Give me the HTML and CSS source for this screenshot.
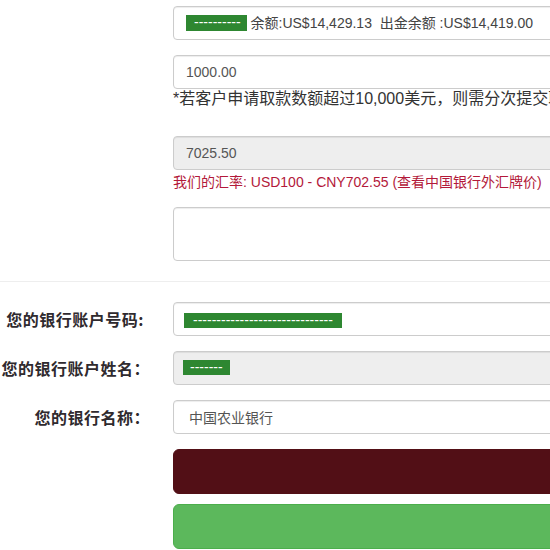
FILE: index.html
```html
<!DOCTYPE html>
<html lang="zh-CN">
<head>
<meta charset="utf-8">
<title>出金申请</title>
<link rel="stylesheet" href="styles.css">
</head>
<body>
<div class="page">
  <form class="form">
    <div class="group">
      <div class="label"></div>
      <div class="field">
        <div class="control static"><span class="mask mask-a">----------</span> 余额:US$14,429.13&nbsp; 出金余额 :US$14,419.00</div>
      </div>
    </div>
    <div class="group">
      <div class="label"></div>
      <div class="field">
        <input class="control" type="text" value="1000.00">
        <p class="note">*若客户申请取款数额超过10,000美元，则需分次提交取款申请。</p>
      </div>
    </div>
    <div class="group">
      <div class="label"></div>
      <div class="field">
        <input class="control disabled" type="text" value="7025.50" disabled>
        <p class="rate">我们的汇率: USD100 - CNY702.55 (查看中国银行外汇牌价)</p>
      </div>
    </div>
    <div class="group">
      <div class="label"></div>
      <div class="field">
        <textarea class="control area" rows="2"></textarea>
      </div>
    </div>
    <hr class="divider">
    <div class="group">
      <label class="label">您的银行账户号码:</label>
      <div class="field">
        <div class="control static"><span class="mask mask-b">------------------------------</span></div>
      </div>
    </div>
    <div class="group">
      <label class="label">您的银行账户姓名<span class="colon">：</span></label>
      <div class="field">
        <div class="control static disabled"><span class="mask mask-c">-------</span></div>
      </div>
    </div>
    <div class="group">
      <label class="label">您的银行名称<span class="colon">：</span></label>
      <div class="field">
        <input class="control indent" type="text" value="中国农业银行">
      </div>
    </div>
    <div class="group">
      <div class="label"></div>
      <div class="field">
        <button type="button" class="btn btn-dark"></button>
      </div>
    </div>
    <div class="group last">
      <div class="label"></div>
      <div class="field">
        <button type="button" class="btn btn-green"></button>
      </div>
    </div>
  </form>
</div>
</body>
</html>
```
FILE: styles.css
```css
html, body {
  margin: 0;
  padding: 0;
  overflow: hidden;
  background: #fff;
}
body {
  font-family: "Liberation Sans", "Noto Sans CJK SC", Arial, sans-serif;
  font-size: 14px;
  line-height: 20px;
  color: #333;
}
.page {
  width: 900px;
  padding-top: 6px;
}
.form {
  margin: 0;
}
.group {
  display: grid;
  grid-template-columns: 158px 1fr;
  align-items: center;
  margin-bottom: 15px;
}
.group.last {
  margin-bottom: 0;
}
.label {
  box-sizing: border-box;
  padding-right: 14px;
  text-align: right;
  font-family: "Noto Sans CJK SC", "Liberation Sans", sans-serif;
  font-weight: bold;
  font-size: 16px;
  line-height: 20px;
  letter-spacing: 0.5px;
  color: #2f2a2e;
  white-space: nowrap;
}
.colon {
  margin-right: -6px;
}
.field {
  padding: 0 15px;
  min-width: 0;
}
.control {
  display: block;
  box-sizing: border-box;
  width: 100%;
  height: 34px;
  margin: 0;
  padding: 6px 12px;
  font-family: "Liberation Sans", "Noto Sans CJK SC", Arial, sans-serif;
  font-size: 14px;
  line-height: 20px;
  color: #555;
  background: #fff;
  border: 1px solid #ccc;
  border-radius: 4px;
  box-shadow: inset 0 1px 1px rgba(0, 0, 0, 0.075);
  outline: none;
}
.indent {
  padding-left: 15px;
}
.static {
  white-space: nowrap;
  color: #444;
}
.disabled {
  background: #eee;
  color: #555;
}
.area {
  height: 54px;
  resize: none;
}
.mask {
  display: inline-block;
  vertical-align: top;
  background: #2e8731;
  color: #fff;
  height: 16px;
  line-height: 14px;
  margin-top: 2px;
  padding: 0 6px 0 8px;
  font-size: 14px;
}
.mask-b {
  height: 15px;
  margin-top: 4px;
  margin-left: -2px;
  padding: 0 9px;
}
.mask-c {
  height: 15px;
  margin-top: 2px;
  margin-left: -3px;
  padding: 0 7px;
}
.note {
  margin: 0 0 12px;
  font-family: "Liberation Sans", "Noto Sans CJK SC", sans-serif;
  font-size: 16px;
  line-height: 20px;
  color: #333;
  white-space: nowrap;
}
.rate {
  margin: 2px 0 0;
  font-size: 14px;
  line-height: 20px;
  color: #b3193a;
  white-space: nowrap;
}
.divider {
  margin: 20px 0;
  border: 0;
  border-top: 1px solid #eee;
  height: 0;
}
.btn {
  display: block;
  box-sizing: border-box;
  width: 100%;
  height: 45px;
  margin: 0;
  padding: 0;
  border-radius: 6px;
  cursor: pointer;
}
.btn-dark {
  background: #520f16;
  border: 1px solid #520f16;
}
.btn-green {
  background: #5cb85c;
  border: 1px solid #4cae4c;
}
.group:has(.btn-dark) {
  margin-bottom: 10px;
}
```
